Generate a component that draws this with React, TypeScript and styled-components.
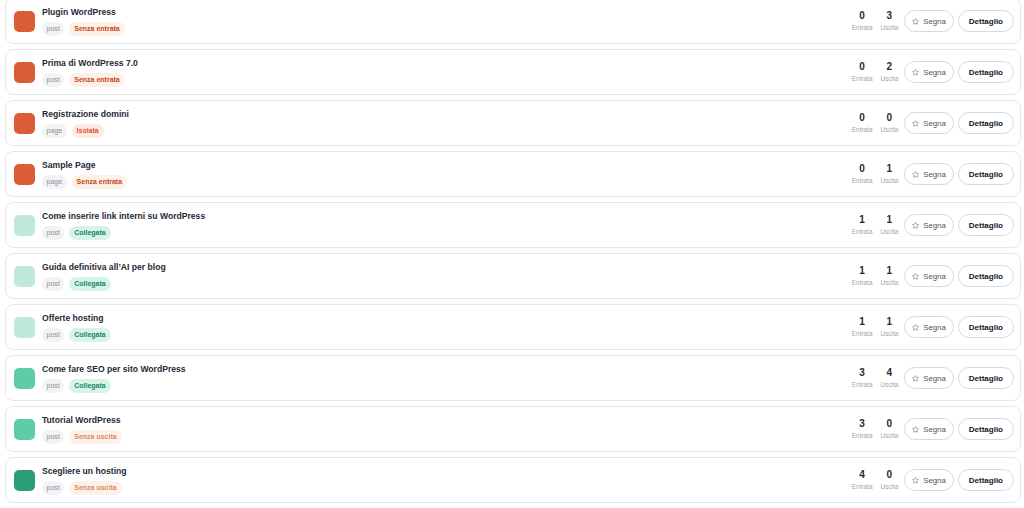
import React from 'react';
import styled, {createGlobalStyle} from 'styled-components';
import {Star} from 'lucide-react';

type Status = 'orphan-in' | 'orphan-out' | 'isolated' | 'linked';
type Heat = 'cold' | 'light' | 'mid' | 'hot';

interface PageRow {
    title: string;
    kind: 'post' | 'page';
    status: Status;
    incoming: number;
    outgoing: number;
    heat: Heat;
}

const rows: PageRow[] = [
    {title: 'Plugin WordPress', kind: 'post', status: 'orphan-in', incoming: 0, outgoing: 3, heat: 'cold'},
    {title: 'Prima di WordPress 7.0', kind: 'post', status: 'orphan-in', incoming: 0, outgoing: 2, heat: 'cold'},
    {title: 'Registrazione domini', kind: 'page', status: 'isolated', incoming: 0, outgoing: 0, heat: 'cold'},
    {title: 'Sample Page', kind: 'page', status: 'orphan-in', incoming: 0, outgoing: 1, heat: 'cold'},
    {title: 'Come inserire link interni su WordPress', kind: 'post', status: 'linked', incoming: 1, outgoing: 1, heat: 'light'},
    {title: 'Guida definitiva all\u2019AI per blog', kind: 'post', status: 'linked', incoming: 1, outgoing: 1, heat: 'light'},
    {title: 'Offerte hosting', kind: 'post', status: 'linked', incoming: 1, outgoing: 1, heat: 'light'},
    {title: 'Come fare SEO per sito WordPress', kind: 'post', status: 'linked', incoming: 3, outgoing: 4, heat: 'mid'},
    {title: 'Tutorial WordPress', kind: 'post', status: 'orphan-out', incoming: 3, outgoing: 0, heat: 'mid'},
    {title: 'Scegliere un hosting', kind: 'post', status: 'orphan-out', incoming: 4, outgoing: 0, heat: 'hot'},
];

const statusLabel: Record<Status, string> = {
    'orphan-in': 'Senza entrata',
    'orphan-out': 'Senza uscita',
    isolated: 'Isolata',
    linked: 'Collegata',
};

const statusColors: Record<Status, {fg: string; bg: string}> = {
    'orphan-in': {fg: '#c8461a', bg: '#fdf0e7'},
    'orphan-out': {fg: '#dc8a62', bg: '#fdf1ea'},
    isolated: {fg: '#e0522a', bg: '#fdebe3'},
    linked: {fg: '#14875d', bg: '#d8f4e9'},
};

const heatColors: Record<Heat, string> = {
    cold: '#db5d36',
    light: '#bfe9da',
    mid: '#5ecda5',
    hot: '#2c9d79',
};

const GlobalStyle = createGlobalStyle`
    html, body {
        margin: 0;
        background: #ffffff;
        font-family: "Liberation Sans", Arial, sans-serif;
        color: #1f2937;
    }
`;

const App: React.FC = () => (
    <>
        <GlobalStyle/>
        <List>
            {rows.map((row) => (
                <Card key={row.title}>
                    <HeatSquare $color={heatColors[row.heat]}/>
                    <Info>
                        <Title>{row.title}</Title>
                        <Tags>
                            <KindTag>{row.kind}</KindTag>
                            <StatusTag $fg={statusColors[row.status].fg} $bg={statusColors[row.status].bg}>
                                {statusLabel[row.status]}
                            </StatusTag>
                        </Tags>
                    </Info>
                    <Stats>
                        <Stat>
                            <StatValue>{row.incoming}</StatValue>
                            <StatLabel>Entrata</StatLabel>
                        </Stat>
                        <Stat>
                            <StatValue>{row.outgoing}</StatValue>
                            <StatLabel>Uscita</StatLabel>
                        </Stat>
                    </Stats>
                    <Actions>
                        <MarkButton>
                            <Star size={7} strokeWidth={2}/>
                            Segna
                        </MarkButton>
                        <DetailButton>Dettaglio</DetailButton>
                    </Actions>
                </Card>
            ))}
        </List>
    </>
);

export default App;

const List = styled.div`
    display: flex;
    flex-direction: column;
    gap: 5px;
    margin-top: -2px;
    padding: 0 3px 0 5px;
`;

const Card = styled.div`
    display: flex;
    align-items: center;
    height: 46px;
    box-sizing: border-box;
    padding: 0 6px 0 8px;
    border: 1px solid #e6e8eb;
    border-radius: 8px;
    background: #ffffff;
`;

const HeatSquare = styled.div<{ $color: string }>`
    flex: none;
    width: 21px;
    height: 21px;
    border-radius: 5px;
    background: ${(p) => p.$color};
    margin-right: 7px;
`;

const Info = styled.div`
    flex-grow: 1;
    display: flex;
    flex-direction: column;
    gap: 4px;
`;

const Title = styled.div`
    font-size: 8.6px;
    line-height: 11px;
    font-weight: 700;
    color: #1f2937;
`;

const Tags = styled.div`
    display: flex;
    gap: 5px;
`;

const Tag = styled.span`
    display: inline-flex;
    align-items: center;
    height: 14px;
    padding: 0 5px;
    border-radius: 7px;
    font-size: 7px;
`;

const KindTag = styled(Tag)`
    padding: 0 4.5px;
    background: #f2f3f5;
    color: #8a9099;
`;

const StatusTag = styled(Tag)<{ $fg: string; $bg: string }>`
    font-weight: 700;
    color: ${(p) => p.$fg};
    background: ${(p) => p.$bg};
`;

const Stats = styled.div`
    display: flex;
    gap: 8px;
    margin-right: 6px;
`;

const Stat = styled.div`
    display: flex;
    flex-direction: column;
    align-items: center;
    gap: 3px;
`;

const StatValue = styled.span`
    font-size: 10px;
    line-height: 10px;
    font-weight: 700;
    color: #1f2937;
`;

const StatLabel = styled.span`
    font-size: 6.4px;
    line-height: 7px;
    color: #a0a6ae;
`;

const Actions = styled.div`
    display: flex;
    gap: 4px;
`;

const PillButton = styled.button`
    display: inline-flex;
    align-items: center;
    height: 22px;
    border: 1px solid #d7dbe0;
    border-radius: 11px;
    background: #ffffff;
    font-family: "Liberation Sans", Arial, sans-serif;
    cursor: pointer;
`;

const MarkButton = styled(PillButton)`
    gap: 4px;
    padding: 0 7px 0 7px;
    font-size: 7.8px;
    color: #4b5563;

    svg {
        color: #6b7280;
    }
`;

const DetailButton = styled(PillButton)`
    padding: 0 10px;
    font-size: 8px;
    font-weight: 700;
    color: #111827;
`;
